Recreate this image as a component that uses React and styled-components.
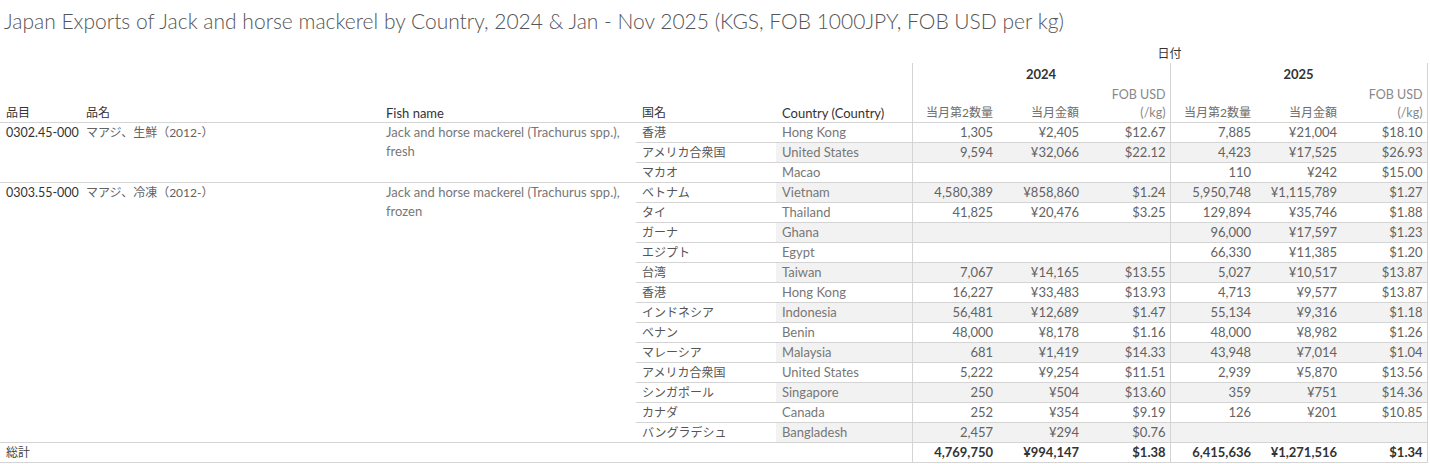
import React from 'react';
import styled, { createGlobalStyle } from 'styled-components';

const GlobalStyle = createGlobalStyle`
  body {
    margin: 0;
    background: #ffffff;
    font-family: Lato, "Noto Sans CJK JP", sans-serif;
  }
`;

const Page = styled.div`
  width: 1430px;
  height: 464px;
  overflow: hidden;
  background: #ffffff;
`;

const Title = styled.h1`
  margin: 0;
  padding: 8px 0 0 4px;
  height: 35px;
  font-size: 21px;
  font-weight: 300;
  color: #555555;
  line-height: 26px;
  white-space: nowrap;
`;

const Table = styled.table`
  width: 1427px;
  table-layout: fixed;
  border-collapse: collapse;
  font-size: 13px;
`;

const HeadCell = styled.th`
  padding: 0 ${({ $right }) => ($right ? '4px' : '6px')};
  height: ${({ $tall }) => ($tall ? '39px' : '20px')};
  line-height: 18px;
  vertical-align: bottom;
  text-align: ${({ $align }) => $align || 'left'};
  font-size: ${({ $jp }) => ($jp ? '12px' : '13px')};
  font-weight: ${({ $bold }) => ($bold ? 700 : 400)};
  color: ${({ $muted }) => ($muted ? '#6e6e6e' : '#333333')};
  border-left: ${({ $edge }) => ($edge ? '1px solid #d4d4d4' : 'none')};
  border-right: ${({ $end }) => ($end ? '1px solid #d4d4d4' : 'none')};
  border-bottom: ${({ $under }) => ($under ? '1px solid #d4d4d4' : 'none')};
  white-space: nowrap;
`;

const SubLabel = styled.span`
  display: block;
  color: #888888;
  font-size: 12.5px;
`;

const Cell = styled.td`
  height: 19px;
  padding: 0 ${({ $num }) => ($num ? '4px' : '6px')};
  line-height: 19px;
  vertical-align: top;
  text-align: ${({ $num }) => ($num ? 'right' : 'left')};
  font-size: ${({ $size }) => $size || '13px'};
  color: ${({ $tone }) => $tone || '#636363'};
  font-weight: ${({ $bold }) => ($bold ? 700 : 400)};
  background: ${({ $band }) => ($band ? '#f2f2f2' : 'transparent')};
  border-top: ${({ $top }) => ($top ? '1px solid #d4d4d4' : 'none')};
  border-bottom: ${({ $bottom }) => ($bottom ? '1px solid #d4d4d4' : 'none')};
  border-left: ${({ $edge }) => ($edge ? '1px solid #d4d4d4' : 'none')};
  border-right: ${({ $end }) => ($end ? '1px solid #d4d4d4' : 'none')};
  white-space: nowrap;
`;

const WrapCell = styled(Cell)`
  white-space: normal;
`;

const groups = [
  {
    code: '0302.45-000',
    name: 'マアジ、生鮮（2012-）',
    fish: ['Jack and horse mackerel (Trachurus spp.),', 'fresh'],
    rows: [
      ['香港', 'Hong Kong', '1,305', '¥2,405', '$12.67', '7,885', '¥21,004', '$18.10'],
      ['アメリカ合衆国', 'United States', '9,594', '¥32,066', '$22.12', '4,423', '¥17,525', '$26.93'],
      ['マカオ', 'Macao', '', '', '', '110', '¥242', '$15.00'],
    ],
  },
  {
    code: '0303.55-000',
    name: 'マアジ、冷凍（2012-）',
    fish: ['Jack and horse mackerel (Trachurus spp.),', 'frozen'],
    rows: [
      ['ベトナム', 'Vietnam', '4,580,389', '¥858,860', '$1.24', '5,950,748', '¥1,115,789', '$1.27'],
      ['タイ', 'Thailand', '41,825', '¥20,476', '$3.25', '129,894', '¥35,746', '$1.88'],
      ['ガーナ', 'Ghana', '', '', '', '96,000', '¥17,597', '$1.23'],
      ['エジプト', 'Egypt', '', '', '', '66,330', '¥11,385', '$1.20'],
      ['台湾', 'Taiwan', '7,067', '¥14,165', '$13.55', '5,027', '¥10,517', '$13.87'],
      ['香港', 'Hong Kong', '16,227', '¥33,483', '$13.93', '4,713', '¥9,577', '$13.87'],
      ['インドネシア', 'Indonesia', '56,481', '¥12,689', '$1.47', '55,134', '¥9,316', '$1.18'],
      ['ベナン', 'Benin', '48,000', '¥8,178', '$1.16', '48,000', '¥8,982', '$1.26'],
      ['マレーシア', 'Malaysia', '681', '¥1,419', '$14.33', '43,948', '¥7,014', '$1.04'],
      ['アメリカ合衆国', 'United States', '5,222', '¥9,254', '$11.51', '2,939', '¥5,870', '$13.56'],
      ['シンガポール', 'Singapore', '250', '¥504', '$13.60', '359', '¥751', '$14.36'],
      ['カナダ', 'Canada', '252', '¥354', '$9.19', '126', '¥201', '$10.85'],
      ['バングラデシュ', 'Bangladesh', '2,457', '¥294', '$0.76', '', '', ''],
    ],
  },
];

const totals = ['4,769,750', '¥994,147', '$1.38', '6,415,636', '¥1,271,516', '$1.34'];

const widths = [80, 300, 256, 140, 136, 85, 86, 87, 85, 86, 86];

// measure cells: first of each year gets a left rule, the last one a right rule
const measureEdges = (i) => ({ $edge: i === 0 || i === 3, $end: i === 5 });

const App = () => {
  let index = 0;
  return (
    <Page>
      <GlobalStyle />
      <Title>
        Japan Exports of Jack and horse mackerel by Country, 2024 &amp; Jan - Nov 2025 (KGS, FOB 1000JPY, FOB USD per kg)
      </Title>
      <Table>
        <colgroup>
          {widths.map((w, i) => (
            <col key={i} style={{ width: w }} />
          ))}
        </colgroup>
        <thead>
          <tr>
            <HeadCell colSpan={5} />
            <HeadCell colSpan={6} $align="center" $jp>日付</HeadCell>
          </tr>
          <tr>
            <HeadCell colSpan={5} />
            <HeadCell colSpan={3} $align="center" $bold $edge>2024</HeadCell>
            <HeadCell colSpan={3} $align="center" $bold $edge $end>2025</HeadCell>
          </tr>
          <tr>
            <HeadCell $tall $under $jp>品目</HeadCell>
            <HeadCell $tall $under $jp>品名</HeadCell>
            <HeadCell $tall $under>Fish name</HeadCell>
            <HeadCell $tall $under $jp>国名</HeadCell>
            <HeadCell $tall $under>Country (Country)</HeadCell>
            {[0, 1].map((y) => (
              <React.Fragment key={y}>
                <HeadCell $tall $under $right $jp $align="right" $muted $edge>当月第2数量</HeadCell>
                <HeadCell $tall $under $right $jp $align="right" $muted>当月金額</HeadCell>
                <HeadCell $tall $under $right $align="right" $muted $end={y === 1}>
                  <SubLabel>FOB USD</SubLabel>
                  <SubLabel>(/kg)</SubLabel>
                </HeadCell>
              </React.Fragment>
            ))}
          </tr>
        </thead>
        <tbody>
          {groups.map((g) =>
            g.rows.map((r, ri) => {
              const band = index % 2 === 1;
              index += 1;
              const first = ri === 0;
              return (
                <tr key={g.code + ri}>
                  {first && (
                    <>
                      <Cell rowSpan={g.rows.length} $top $size="12.5px" $tone="#333333">{g.code}</Cell>
                      <Cell rowSpan={g.rows.length} $top $size="12px">{g.name}</Cell>
                      <WrapCell rowSpan={g.rows.length} $top $tone="#777777">
                        {g.fish[0]}
                        <br />
                        {g.fish[1]}
                      </WrapCell>
                    </>
                  )}
                  <Cell $top $size="12px" $tone="#555555">{r[0]}</Cell>
                  <Cell $top $band={band} $tone="#777777">{r[1]}</Cell>
                  {r.slice(2).map((v, i) => (
                    <Cell key={i} $num $top $band={band} {...measureEdges(i)}>
                      {v}
                    </Cell>
                  ))}
                </tr>
              );
            })
          )}
          <tr>
            <Cell colSpan={5} $top $bottom $size="12px" $tone="#444444">総計</Cell>
            {totals.map((v, i) => (
              <Cell key={i} $num $top $bottom $bold $tone="#333333" {...measureEdges(i)}>
                {v}
              </Cell>
            ))}
          </tr>
        </tbody>
      </Table>
    </Page>
  );
};

export default App;
